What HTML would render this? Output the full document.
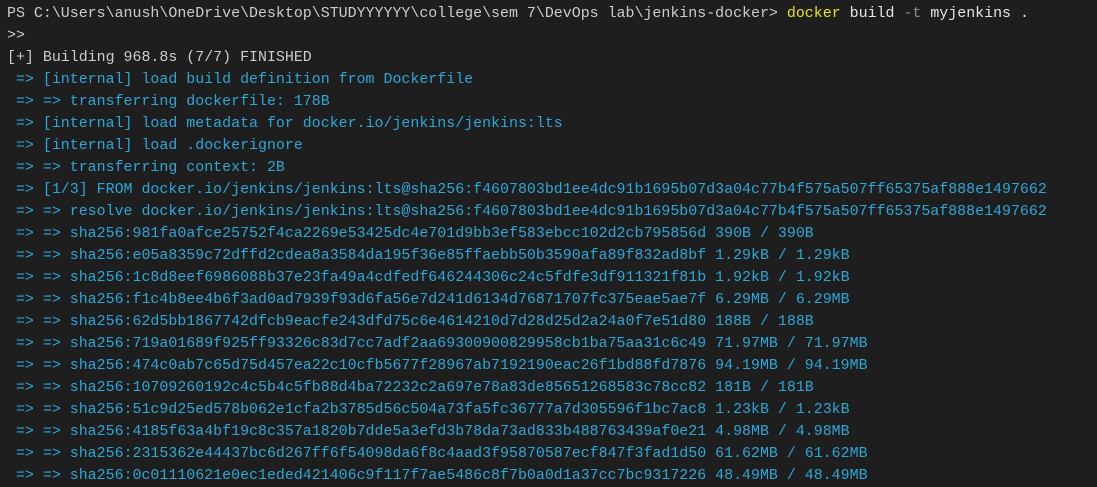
<!DOCTYPE html>
<html><head><meta charset="utf-8"><style>
html,body{margin:0;padding:0;background:#1e1e1e;width:1097px;height:481px;overflow:hidden}
pre{margin:0;position:absolute;left:7px;top:3px;font-family:"Liberation Mono",monospace;font-size:14.95px;line-height:22px;color:#cccccc;white-space:pre}
.b{color:#2aa8d8}.y{color:#e5e510}.g{color:#8a8a8a}.w{color:#e5e5e5}
</style></head><body>
<pre>PS C:\Users\anush\OneDrive\Desktop\STUDYYYYYY\college\sem 7\DevOps lab\jenkins-docker&gt; <span class="y">docker</span> <span class="w">build</span> <span class="g">-t</span> <span class="w">myjenkins .</span>
&gt;&gt;
[+] Building 968.8s (7/7) FINISHED
<span class="b"> =&gt; [internal] load build definition from Dockerfile
 =&gt; =&gt; transferring dockerfile: 178B
 =&gt; [internal] load metadata for docker.io/jenkins/jenkins:lts
 =&gt; [internal] load .dockerignore
 =&gt; =&gt; transferring context: 2B
 =&gt; [1/3] FROM docker.io/jenkins/jenkins:lts@sha256:f4607803bd1ee4dc91b1695b07d3a04c77b4f575a507ff65375af888e1497662
 =&gt; =&gt; resolve docker.io/jenkins/jenkins:lts@sha256:f4607803bd1ee4dc91b1695b07d3a04c77b4f575a507ff65375af888e1497662
 =&gt; =&gt; sha256:981fa0afce25752f4ca2269e53425dc4e701d9bb3ef583ebcc102d2cb795856d 390B / 390B
 =&gt; =&gt; sha256:e05a8359c72dffd2cdea8a3584da195f36e85ffaebb50b3590afa89f832ad8bf 1.29kB / 1.29kB
 =&gt; =&gt; sha256:1c8d8eef6986088b37e23fa49a4cdfedf646244306c24c5fdfe3df911321f81b 1.92kB / 1.92kB
 =&gt; =&gt; sha256:f1c4b8ee4b6f3ad0ad7939f93d6fa56e7d241d6134d76871707fc375eae5ae7f 6.29MB / 6.29MB
 =&gt; =&gt; sha256:62d5bb1867742dfcb9eacfe243dfd75c6e4614210d7d28d25d2a24a0f7e51d80 188B / 188B
 =&gt; =&gt; sha256:719a01689f925ff93326c83d7cc7adf2aa69300900829958cb1ba75aa31c6c49 71.97MB / 71.97MB
 =&gt; =&gt; sha256:474c0ab7c65d75d457ea22c10cfb5677f28967ab7192190eac26f1bd88fd7876 94.19MB / 94.19MB
 =&gt; =&gt; sha256:10709260192c4c5b4c5fb88d4ba72232c2a697e78a83de85651268583c78cc82 181B / 181B
 =&gt; =&gt; sha256:51c9d25ed578b062e1cfa2b3785d56c504a73fa5fc36777a7d305596f1bc7ac8 1.23kB / 1.23kB
 =&gt; =&gt; sha256:4185f63a4bf19c8c357a1820b7dde5a3efd3b78da73ad833b488763439af0e21 4.98MB / 4.98MB
 =&gt; =&gt; sha256:2315362e44437bc6d267ff6f54098da6f8c4aad3f95870587ecf847f3fad1d50 61.62MB / 61.62MB
 =&gt; =&gt; sha256:0c01110621e0ec1eded421406c9f117f7ae5486c8f7b0a0d1a37cc7bc9317226 48.49MB / 48.49MB</span></pre>
</body></html>
